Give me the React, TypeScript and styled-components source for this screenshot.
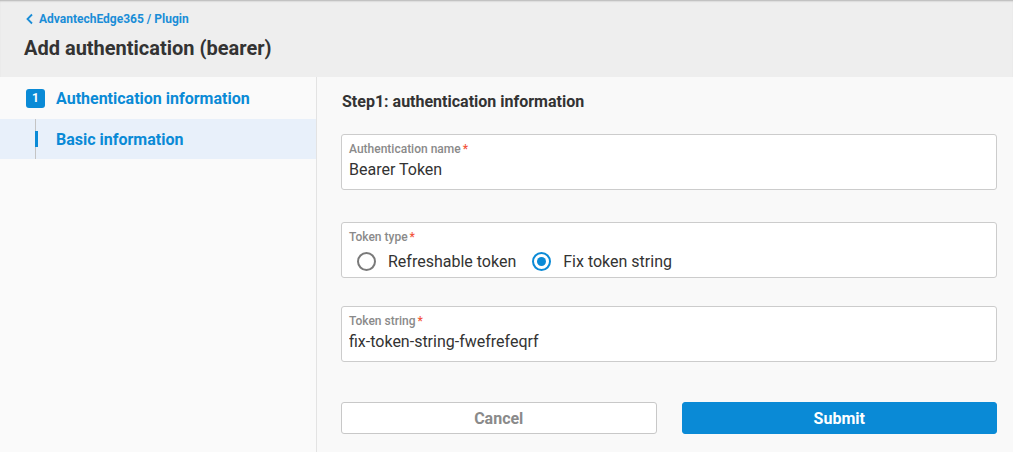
import React, { useState } from "react";
import styled, { createGlobalStyle } from "styled-components";

const GlobalStyle = createGlobalStyle`
  html, body {
    margin: 0;
    padding: 0;
    background: #f9f9f9;
    font-family: Roboto, "Noto Sans", "Liberation Sans", sans-serif;
  }
  * { box-sizing: border-box; }
`;

const Page = styled.div`
  display: flex;
  flex-direction: column;
  width: 100%;
  height: 452px;
  overflow: hidden;
`;

const Header = styled.header`
  height: 77px;
  background: #eeeeee;
  padding: 11px 24px 0 24px;
  box-shadow: inset 0 2px 2px -1px rgba(0, 0, 0, 0.25);
`;

const Breadcrumb = styled.a`
  display: flex;
  align-items: center;
  gap: 3px;
  color: #1a8dd7;
  font-size: 12px;
  font-weight: 700;
  line-height: 16px;
  text-decoration: none;
  cursor: pointer;
`;

const Title = styled.h1`
  margin: 9px 0 0 0;
  font-size: 20px;
  font-weight: 700;
  line-height: 24px;
  color: #333333;
`;

const Body = styled.div`
  display: flex;
  flex: 1;
`;

const Sidebar = styled.nav`
  width: 317px;
  flex-shrink: 0;
  background: #fafafa;
  border-right: 1px solid #e3e3e3;
  padding-top: 9px;
`;

const StepRow = styled.div`
  display: flex;
  align-items: center;
  gap: 11px;
  height: 24px;
  padding-left: 26px;
  margin-bottom: 9px;
`;

const StepBadge = styled.span`
  display: inline-flex;
  align-items: center;
  justify-content: center;
  width: 19px;
  height: 19px;
  border-radius: 3px;
  background: #0a8ad6;
  color: #ffffff;
  font-size: 12px;
  font-weight: 700;
`;

const StepLabel = styled.span`
  color: #0a8ad6;
  font-size: 16px;
  font-weight: 700;
`;

const SubItem = styled.div<{ $active?: boolean }>`
  position: relative;
  display: flex;
  align-items: center;
  height: 40px;
  padding-left: 56px;
  background: ${({ $active }) => ($active ? "#e8f0fa" : "transparent")};
  color: #0a8ad6;
  font-size: 16px;
  font-weight: 700;

  &::before {
    content: "";
    position: absolute;
    left: 35px;
    top: 0;
    bottom: 0;
    width: 1px;
    background: #c4c4c4;
  }

  &::after {
    content: "";
    position: absolute;
    left: 35px;
    top: 12px;
    width: 3px;
    height: 16px;
    background: ${({ $active }) => ($active ? "#0a8ad6" : "transparent")};
  }
`;

const Content = styled.main`
  flex: 1;
  padding: 15px 16px 0 24px;
`;

const StepHeading = styled.h2`
  margin: 0 0 23px 1px;
  font-size: 16px;
  font-weight: 700;
  line-height: 19px;
  color: #333333;
`;

const Form = styled.form`
  display: flex;
  flex-direction: column;
`;

const Field = styled.div<{ $spaceAfter?: number }>`
  height: 56px;
  background: #ffffff;
  border: 1px solid #cccccc;
  border-radius: 3px;
  padding: 7px 7px 0 7px;
  margin-bottom: ${({ $spaceAfter }) => $spaceAfter ?? 0}px;
`;

const FieldLabel = styled.label`
  display: block;
  font-size: 12px;
  font-weight: 500;
  line-height: 15px;
  color: #8a8a8a;
`;

const Required = styled.span`
  color: #f2543c;
  margin-left: 2px;
`;

const TextValue = styled.input`
  display: block;
  width: 100%;
  border: none;
  outline: none;
  padding: 0;
  margin-top: 3px;
  background: transparent;
  font-family: inherit;
  font-size: 16px;
  line-height: 20px;
  color: #333333;
`;

const RadioGroup = styled.div`
  display: flex;
  align-items: center;
  gap: 16px;
  margin-top: 7px;
  padding-left: 8px;
`;

const RadioOption = styled.label`
  display: flex;
  align-items: center;
  gap: 12px;
  font-size: 16px;
  color: #333333;
  cursor: pointer;
`;

const RadioCircle = styled.span<{ $checked?: boolean }>`
  display: inline-flex;
  align-items: center;
  justify-content: center;
  width: 19px;
  height: 19px;
  border-radius: 50%;
  border: 2px solid ${({ $checked }) => ($checked ? "#0a8ad6" : "#7a7a7a")};

  &::after {
    content: "";
    width: 9px;
    height: 9px;
    border-radius: 50%;
    background: ${({ $checked }) => ($checked ? "#0a8ad6" : "transparent")};
  }
`;

const Actions = styled.div`
  display: grid;
  grid-template-columns: 1fr 1fr;
  gap: 25px;
  margin-top: 40px;
`;

const Button = styled.button<{ $primary?: boolean }>`
  height: 32px;
  border-radius: 3px;
  font-family: inherit;
  font-size: 16px;
  font-weight: 700;
  cursor: pointer;
  border: 1px solid ${({ $primary }) => ($primary ? "#0a8ad6" : "#c8c8c8")};
  background: ${({ $primary }) => ($primary ? "#0a8ad6" : "#ffffff")};
  color: ${({ $primary }) => ($primary ? "#ffffff" : "#8a8a8a")};
`;

export default function App() {
  const [tokenType, setTokenType] = useState("fix");

  return (
    <Page>
      <GlobalStyle />
      <Header>
        <Breadcrumb>
          <svg width="12" height="12" viewBox="0 0 12 12">
            <path d="M8 1.5 L3.5 6 L8 10.5" fill="none" stroke="#1a8dd7" strokeWidth="1.8" />
          </svg>
          AdvantechEdge365 / Plugin
        </Breadcrumb>
        <Title>Add authentication (bearer)</Title>
      </Header>
      <Body>
        <Sidebar>
          <StepRow>
            <StepBadge>1</StepBadge>
            <StepLabel>Authentication information</StepLabel>
          </StepRow>
          <SubItem $active>Basic information</SubItem>
        </Sidebar>
        <Content>
          <StepHeading>Step1: authentication information</StepHeading>
          <Form onSubmit={(e) => e.preventDefault()}>
            <Field $spaceAfter={32}>
              <FieldLabel>
                Authentication name<Required>*</Required>
              </FieldLabel>
              <TextValue defaultValue="Bearer Token" />
            </Field>
            <Field $spaceAfter={28}>
              <FieldLabel>
                Token type<Required>*</Required>
              </FieldLabel>
              <RadioGroup>
                <RadioOption onClick={() => setTokenType("refresh")}>
                  <RadioCircle $checked={tokenType === "refresh"} />
                  Refreshable token
                </RadioOption>
                <RadioOption onClick={() => setTokenType("fix")}>
                  <RadioCircle $checked={tokenType === "fix"} />
                  Fix token string
                </RadioOption>
              </RadioGroup>
            </Field>
            <Field>
              <FieldLabel>
                Token string<Required>*</Required>
              </FieldLabel>
              <TextValue defaultValue="fix-token-string-fwefrefeqrf" />
            </Field>
          </Form>
          <Actions>
            <Button type="button">Cancel</Button>
            <Button type="button" $primary>
              Submit
            </Button>
          </Actions>
        </Content>
      </Body>
    </Page>
  );
}
